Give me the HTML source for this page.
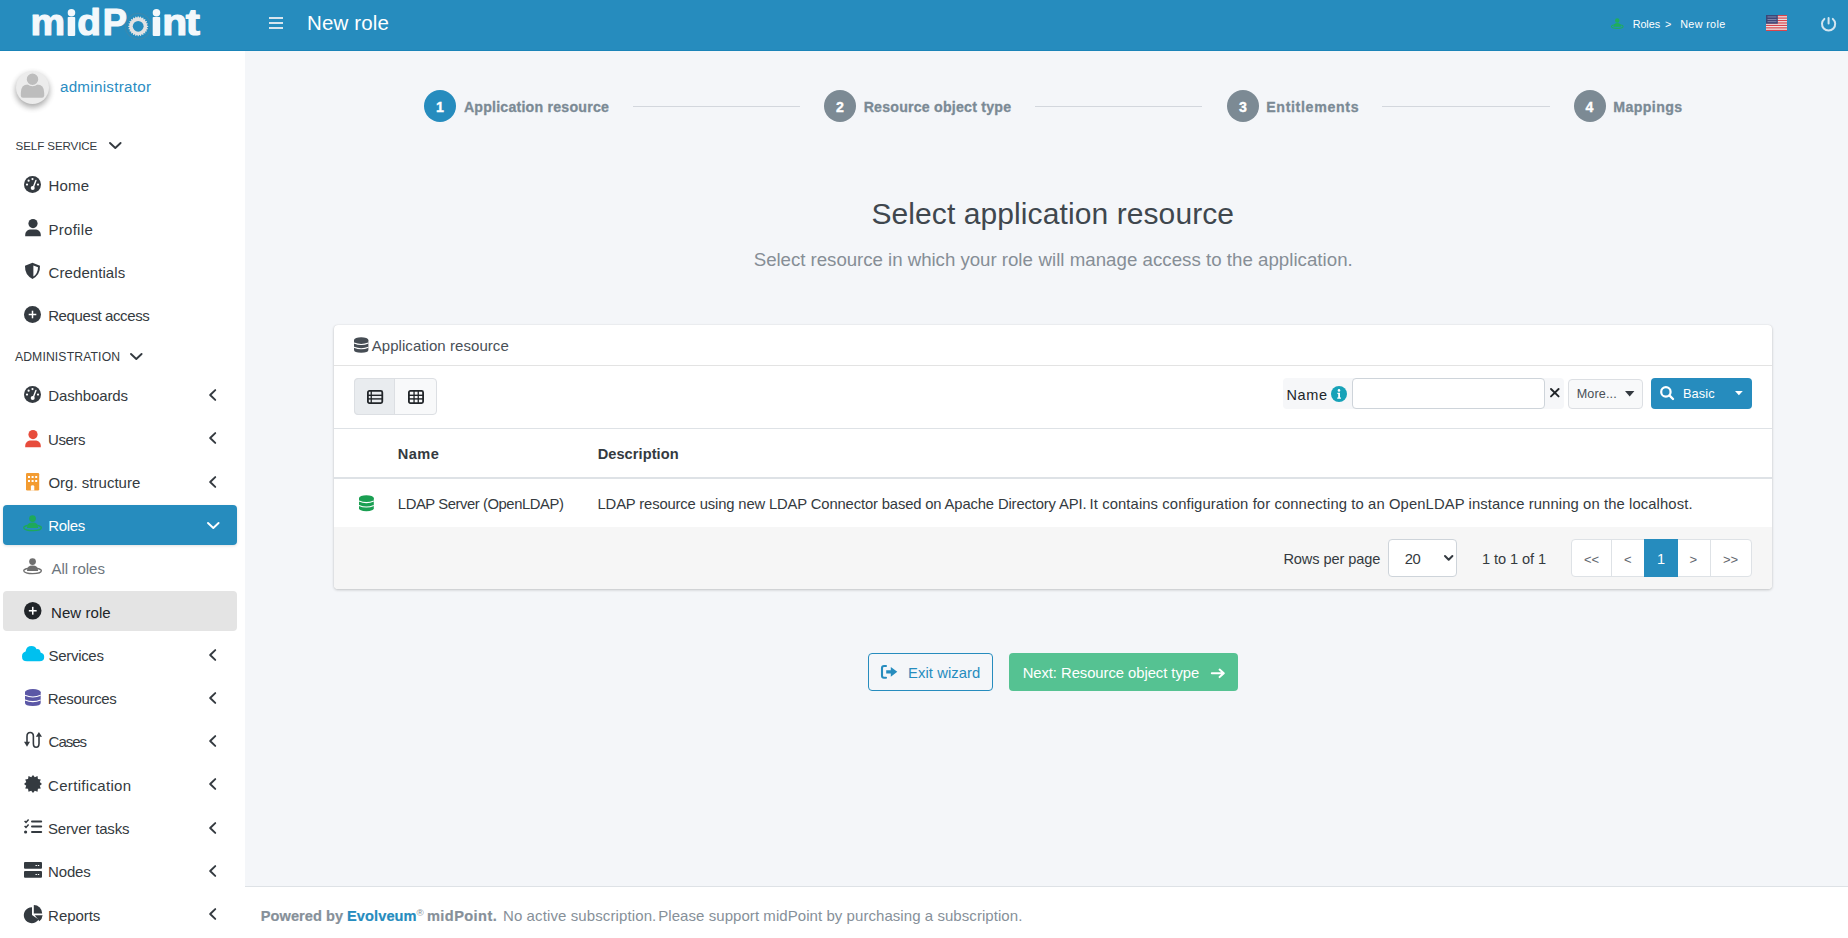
<!DOCTYPE html>
<html><head><meta charset="utf-8">
<style>
*{box-sizing:border-box;margin:0;padding:0}
html,body{width:1848px;height:938px;overflow:hidden;background:#f4f6f9;font-family:"Liberation Sans",sans-serif;color:#343a40;position:relative}
.a{position:absolute}
.t{position:absolute;white-space:nowrap;line-height:1}
svg{position:absolute;overflow:visible}
sup{line-height:0}
</style></head><body>
<div class="a" style="left:0px;top:0px;width:1848px;height:51px;background:#268cbe;border-bottom:1px solid #1a84b8"></div>
<svg style="left:0px;top:0px" width="220" height="50" viewBox="0 0 220 50"><text x="0" y="0" transform="translate(30.6,35.0) scale(1.05,1)" font-family="Liberation Sans" font-weight="700" font-size="37" fill="#f3f8fb" stroke="#f3f8fb" stroke-width="1.2" stroke-linejoin="round">m</text><rect x="67.7" y="16.9" width="7.5" height="19" rx="0.8" fill="#f3f8fb"/><circle cx="71.45" cy="12.7" r="3.75" fill="#f3f8fb"/><text x="0" y="0" transform="translate(77.2,35.0) scale(1.05,1)" font-family="Liberation Sans" font-weight="700" font-size="37" fill="#f3f8fb" stroke="#f3f8fb" stroke-width="1.2" stroke-linejoin="round">d</text><text x="0" y="0" transform="translate(102.8,35.0) scale(0.98,1)" font-family="Liberation Sans" font-weight="700" font-size="37" fill="#f3f8fb" stroke="#f3f8fb" stroke-width="1.2" stroke-linejoin="round">P</text><rect x="152.7" y="16.9" width="7.5" height="19" rx="0.8" fill="#f3f8fb"/><circle cx="156.45" cy="12.7" r="3.75" fill="#f3f8fb"/><text x="0" y="0" transform="translate(162.2,35.0) scale(1.1,1)" font-family="Liberation Sans" font-weight="700" font-size="37" fill="#f3f8fb" stroke="#f3f8fb" stroke-width="1.2" stroke-linejoin="round">n</text><text x="0" y="0" transform="translate(185.8,35.0) scale(1.15,1)" font-family="Liberation Sans" font-weight="700" font-size="37" fill="#f3f8fb" stroke="#f3f8fb" stroke-width="1.2" stroke-linejoin="round">t</text><circle cx="138.2" cy="26.3" r="13" fill="none" stroke="rgba(160,120,100,.35)" stroke-width=".6"/><polygon points="148.19,25.97 148.19,26.63 146.96,27.16 146.88,27.73 147.94,28.57 147.77,29.20 146.44,29.40 146.22,29.93 147.02,31.01 146.69,31.58 145.35,31.43 145.00,31.88 145.50,33.14 145.04,33.60 143.78,33.10 143.33,33.45 143.48,34.79 142.91,35.12 141.83,34.32 141.30,34.54 141.10,35.87 140.47,36.04 139.63,34.98 139.06,35.06 138.53,36.29 137.87,36.29 137.34,35.06 136.77,34.98 135.93,36.04 135.30,35.87 135.10,34.54 134.57,34.32 133.49,35.12 132.92,34.79 133.07,33.45 132.62,33.10 131.36,33.60 130.90,33.14 131.40,31.88 131.05,31.43 129.71,31.58 129.38,31.01 130.18,29.93 129.96,29.40 128.63,29.20 128.46,28.57 129.52,27.73 129.44,27.16 128.21,26.63 128.21,25.97 129.44,25.44 129.52,24.87 128.46,24.03 128.63,23.40 129.96,23.20 130.18,22.67 129.38,21.59 129.71,21.02 131.05,21.17 131.40,20.72 130.90,19.46 131.36,19.00 132.62,19.50 133.07,19.15 132.92,17.81 133.49,17.48 134.57,18.28 135.10,18.06 135.30,16.73 135.93,16.56 136.77,17.62 137.34,17.54 137.87,16.31 138.53,16.31 139.06,17.54 139.63,17.62 140.47,16.56 141.10,16.73 141.30,18.06 141.83,18.28 142.91,17.48 143.48,17.81 143.33,19.15 143.78,19.50 145.04,19.00 145.50,19.46 145.00,20.72 145.35,21.17 146.69,21.02 147.02,21.59 146.22,22.67 146.44,23.20 147.77,23.40 147.94,24.03 146.88,24.87 146.96,25.44" fill="#e2e2e2"/><circle cx="138.2" cy="26.3" r="5.4" fill="#268cbe"/></svg>
<svg style="left:269px;top:17px" width="14" height="12" viewBox="0 0 14 12"><rect x="0" y="0" width="14" height="2" fill="#d8e5ee"/><rect x="0" y="5" width="14" height="2" fill="#d8e5ee"/><rect x="0" y="10" width="14" height="2" fill="#d8e5ee"/></svg>
<div class="t" style="left:306.96px;top:12.65px;font-size:20.5px;color:#fff;letter-spacing:0.150px;">New role</div>
<svg style="left:1610.5px;top:17.5px" width="12.5" height="11" viewBox="0 0 19 16.5"><circle cx="9.5" cy="3.6" r="3.4" fill="#1fae5b"/><path d="M3.9 13 Q3.9 7.6 9.5 7.6 Q15.1 7.6 15.1 13 Z" fill="#1fae5b"/><ellipse cx="9.5" cy="12.9" rx="8.9" ry="2.9" fill="none" stroke="#1fae5b" stroke-width="1.6"/></svg>
<div class="t" style="left:1632.64px;top:18.96px;font-size:10.8px;color:#fff;letter-spacing:-0.045px;">Roles</div>
<div class="t" style="left:1665.00px;top:18.96px;font-size:10.8px;color:#fff;">&gt;</div>
<div class="t" style="left:1680.20px;top:18.96px;font-size:10.8px;color:#fff;letter-spacing:0.348px;">New role</div>
<svg style="left:1766px;top:15px" width="21" height="16" viewBox="0 0 21 16"><rect width="21" height="16" fill="#eeeeee"/><g fill="#d9444c"><rect y="0" width="21" height="1.25"/><rect y="2.45" width="21" height="1.25"/><rect y="4.9" width="21" height="1.25"/><rect y="7.35" width="21" height="1.25"/><rect y="9.8" width="21" height="1.25"/><rect y="12.25" width="21" height="1.25"/><rect y="14.75" width="21" height="1.25"/></g><rect width="11.8" height="8.7" fill="#3d4677"/><g fill="#9aa0c0"><rect x="1.5" y="1.6" width="9" height="0.7"/><rect x="1.5" y="4" width="9" height="0.7"/><rect x="1.5" y="6.4" width="9" height="0.7"/></g></svg>
<svg style="left:1820.7px;top:17px" width="15.2" height="14.2" viewBox="0 0 15.2 14.2"><path d="M3.36 1.9 A6.6 6.6 0 1 0 11.84 1.9" fill="none" stroke="#d3e5f0" stroke-width="2" stroke-linecap="round"/><line x1="7.6" y1="1" x2="7.6" y2="6.6" stroke="#d3e5f0" stroke-width="2" stroke-linecap="round"/></svg>
<div class="a" style="left:0px;top:51px;width:245px;height:887px;background:#fff"></div>
<div class="a" style="left:16px;top:70.5px;width:33px;height:33px;border-radius:50%;background:#ececec;box-shadow:0 3px 6px rgba(0,0,0,.16),0 3px 6px rgba(0,0,0,.23)"></div>
<svg style="left:16px;top:70.5px" width="33" height="33" viewBox="0 0 33 33"><path d="M4.8 22 Q4.8 13.6 12 13.6 L21 13.6 Q28.2 13.6 28.2 22 L28.2 24.6 Q28.2 26.8 26 26.8 L7 26.8 Q4.8 26.8 4.8 24.6Z" fill="#bdbdbd"/><circle cx="16.5" cy="8.2" r="6.4" fill="#bdbdbd" stroke="#ececec" stroke-width="1.3"/></svg>
<div class="t" style="left:59.94px;top:79.33px;font-size:15.2px;color:#2a8cc2;letter-spacing:0.269px;">administrator</div>
<div class="t" style="left:15.54px;top:139.78px;font-size:11.6px;color:#343a40;letter-spacing:-0.100px;">SELF SERVICE</div>
<svg style="left:108.5px;top:142px" width="12.6" height="7" viewBox="0 0 12.6 7"><path d="M1 1 L6.3 6 L11.6 1" fill="none" stroke="#343a40" stroke-width="1.9" stroke-linecap="round" stroke-linejoin="round"/></svg>
<div class="t" style="left:14.88px;top:350.67px;font-size:12.2px;color:#343a40;letter-spacing:0.140px;">ADMINISTRATION</div>
<svg style="left:130.4px;top:353px" width="12.6" height="7" viewBox="0 0 12.6 7"><path d="M1 1 L6.3 6 L11.6 1" fill="none" stroke="#343a40" stroke-width="1.9" stroke-linecap="round" stroke-linejoin="round"/></svg>
<div class="a" style="left:3px;top:504.81px;width:234px;height:40px;background:#268cbe;border-radius:4px;box-shadow:0 1px 3px rgba(0,0,0,.12)"></div>
<div class="a" style="left:3px;top:591.35px;width:234px;height:40px;background:#e4e4e4;border-radius:4px"></div>
<svg style="left:24.1px;top:175.7px" width="17" height="17" viewBox="0 0 17 17"><circle cx="8.5" cy="8.5" r="8.5" fill="#343a40"/><circle cx="8.5" cy="3.1" r="1.1" fill="#fff"/><circle cx="4.6" cy="4.7" r="1.1" fill="#fff"/><circle cx="3" cy="8.6" r="1.1" fill="#fff"/><circle cx="14" cy="8.6" r="1.1" fill="#fff"/><path d="M11.9 4.4 L9.6 10.4" stroke="#fff" stroke-width="1.4" stroke-linecap="round"/><circle cx="8.7" cy="12" r="2" fill="#fff"/></svg>
<svg style="left:24.6px;top:218.77px" width="16" height="17.2" viewBox="0 0 16 17.2"><circle cx="8" cy="4.6" r="4.6" fill="#343a40"/><path d="M0.2 17.2 L0.2 16 C0.2 12.2 3 10.4 6 10.4 L10 10.4 C13 10.4 15.8 12.2 15.8 16 L15.8 17.2 Z" fill="#343a40"/></svg>
<svg style="left:24.2px;top:261.74px" width="17" height="17.5" viewBox="0 0 17 17.5"><path d="M8.5 0.8 L16 3.8 Q16.4 12.8 8.5 17 Q0.6 12.8 1 3.8 Z" fill="#343a40"/><path d="M9.4 3.4 L14 5.2 Q13.8 11.8 9.4 14.5 Z" fill="#fff"/></svg>
<svg style="left:24.2px;top:306.41px" width="17" height="17" viewBox="0 0 17 17"><circle cx="8.5" cy="8.5" r="8.5" fill="#343a40"/><rect x="7.75" y="4.7" width="1.5" height="7.6" fill="#fff"/><rect x="4.7" y="7.75" width="7.6" height="1.5" fill="#fff"/></svg>
<svg style="left:24.1px;top:386.0px" width="17" height="17" viewBox="0 0 17 17"><circle cx="8.5" cy="8.5" r="8.5" fill="#343a40"/><circle cx="8.5" cy="3.1" r="1.1" fill="#fff"/><circle cx="4.6" cy="4.7" r="1.1" fill="#fff"/><circle cx="3" cy="8.6" r="1.1" fill="#fff"/><circle cx="14" cy="8.6" r="1.1" fill="#fff"/><path d="M11.9 4.4 L9.6 10.4" stroke="#fff" stroke-width="1.4" stroke-linecap="round"/><circle cx="8.7" cy="12" r="2" fill="#fff"/></svg>
<svg style="left:24.6px;top:429.87px" width="16" height="17.2" viewBox="0 0 16 17.2"><circle cx="8" cy="4.6" r="4.6" fill="#e74c3c"/><path d="M0.2 17.2 L0.2 16 C0.2 12.2 3 10.4 6 10.4 L10 10.4 C13 10.4 15.8 12.2 15.8 16 L15.8 17.2 Z" fill="#e74c3c"/></svg>
<svg style="left:25.8px;top:472.74px" width="13.2" height="17.4" viewBox="0 0 13.2 17.4"><rect x="0" y="0" width="13.2" height="17.4" rx="1.2" fill="#f39c32"/><g fill="#fff"><rect x="2" y="3" width="2" height="2"/><rect x="5.6" y="3" width="2" height="2"/><rect x="9.2" y="3" width="2" height="2"/><rect x="2" y="7" width="2" height="2"/><rect x="5.6" y="7" width="2" height="2"/><rect x="9.2" y="7" width="2" height="2"/><path d="M4.9 17.4 L4.9 13.6 Q4.9 12.3 6.6 12.3 Q8.3 12.3 8.3 13.6 L8.3 17.4Z"/></g></svg>
<svg style="left:22.9px;top:515.41px" width="19.1" height="16.4" viewBox="0 0 19 16.5"><circle cx="9.5" cy="3.6" r="3.4" fill="#1ea95a"/><path d="M3.9 13 Q3.9 7.6 9.5 7.6 Q15.1 7.6 15.1 13 Z" fill="#1ea95a"/><ellipse cx="9.5" cy="12.9" rx="8.9" ry="2.9" fill="none" stroke="#1ea95a" stroke-width="1.3"/></svg>
<svg style="left:22.9px;top:558.08px" width="19.1" height="16.4" viewBox="0 0 19 16.5"><circle cx="9.5" cy="3.6" r="3.4" fill="#6f6f6f"/><path d="M3.9 13 Q3.9 7.6 9.5 7.6 Q15.1 7.6 15.1 13 Z" fill="#6f6f6f"/><ellipse cx="9.5" cy="12.9" rx="8.9" ry="2.9" fill="none" stroke="#6f6f6f" stroke-width="1.3"/></svg>
<svg style="left:23.6px;top:602.0500000000001px" width="17.5" height="17.5" viewBox="0 0 17 17"><circle cx="8.5" cy="8.5" r="8.5" fill="#212529"/><rect x="7.75" y="4.7" width="1.5" height="7.6" fill="#fff"/><rect x="4.7" y="7.75" width="7.6" height="1.5" fill="#fff"/></svg>
<svg style="left:21.9px;top:646.02px" width="22.2" height="15.3" viewBox="0 0 22.2 15.3"><path d="M5 15.3 Q0 15.3 0 10.4 Q0 6.4 3.6 5.5 Q4.4 0 9.6 0 Q13.2 0 14.6 3.2 Q18 2.6 18.6 6.6 Q22.2 7.6 22.2 11 Q22.2 15.3 17.6 15.3 Z" fill="#00c0ef"/></svg>
<svg style="left:25.1px;top:689.3900000000001px" width="15.7" height="17" viewBox="0 0 15.7 17"><ellipse cx="7.85" cy="3" rx="7.85" ry="3" fill="#5b57a6"/><path d="M0 3 L0 14 Q0 17 7.85 17 Q15.7 17 15.7 14 L15.7 3 Z" fill="#5b57a6"/><path d="M0 6.3 Q7.85 9.6 15.7 6.3" stroke="#fff" stroke-width="1.1" fill="none"/><path d="M0 11 Q7.85 14.3 15.7 11" stroke="#fff" stroke-width="1.1" fill="none"/></svg>
<svg style="left:24px;top:730.5600000000001px" width="18" height="17.8" viewBox="0 0 19.2 17.8"><path d="M3.2 12 L3.2 5 Q3.2 1 6.6 1 Q10 1 10 5 L10 12.8 Q10 16.8 13 16.8 Q16 16.8 16 12.8 L16 5" fill="none" stroke="#343a40" stroke-width="1.7"/><path d="M0 11 L6.4 11 L3.2 16.2Z" fill="#343a40"/><path d="M12.6 5.6 L19.2 5.6 L15.9 0.6Z" fill="#343a40"/></svg>
<svg style="left:23.6px;top:775.0300000000001px" width="18" height="17.8" viewBox="0 0 18 17.8"><polygon points="18.00,8.90 15.76,10.71 16.79,13.40 13.95,13.85 13.50,16.69 10.81,15.66 9.00,17.90 7.19,15.66 4.50,16.69 4.05,13.85 1.21,13.40 2.24,10.71 0.00,8.90 2.24,7.09 1.21,4.40 4.05,3.95 4.50,1.11 7.19,2.14 9.00,-0.10 10.81,2.14 13.50,1.11 13.95,3.95 16.79,4.40 15.76,7.09" fill="#343a40"/></svg>
<svg style="left:23.7px;top:819.4000000000001px" width="18.2" height="14.7" viewBox="0 0 18.2 14.7"><path d="M0.6 2 L2 3.4 L4.6 0.6" stroke="#343a40" stroke-width="1.5" fill="none"/><path d="M0.6 7 L2 8.4 L4.6 5.6" stroke="#343a40" stroke-width="1.5" fill="none"/><circle cx="1.6" cy="13" r="1.6" fill="#343a40"/><rect x="7" y="1.4" width="11.2" height="2" rx="1" fill="#343a40"/><rect x="7" y="6.4" width="11.2" height="2" rx="1" fill="#343a40"/><rect x="7" y="12" width="11.2" height="2" rx="1" fill="#343a40"/></svg>
<svg style="left:23.7px;top:861.97px" width="18" height="16" viewBox="0 0 18 16"><rect x="0" y="0" width="18" height="6.8" rx="1" fill="#343a40"/><rect x="0" y="9" width="18" height="6.8" rx="1" fill="#343a40"/><g fill="#fff"><rect x="11.5" y="3" width="1.4" height="1"/><rect x="13.8" y="3" width="1.4" height="1"/><rect x="11.5" y="12" width="1.4" height="1"/><rect x="13.8" y="12" width="1.4" height="1"/></g></svg>
<svg style="left:23.7px;top:905.44px" width="18.8" height="17.5" viewBox="0 0 18.8 17.5"><path d="M8 2.2 L8 10 L14.6 14.4 A8 8 0 1 1 8 2.2Z" fill="#343a40"/><path d="M9.8 0 A8.4 8.4 0 0 1 18.2 8.4 L9.8 8.4Z" fill="#343a40"/><path d="M10.8 10.2 L18.6 10.2 A8.6 8.6 0 0 1 15.4 16.2Z" fill="#343a40"/></svg>
<div class="t" style="left:48.42px;top:178.30px;font-size:15px;color:#343a40;letter-spacing:0.194px;">Home</div>
<div class="t" style="left:48.42px;top:221.57px;font-size:15px;color:#343a40;letter-spacing:0.300px;">Profile</div>
<div class="t" style="left:48.60px;top:264.84px;font-size:15px;color:#343a40;letter-spacing:0.072px;">Credentials</div>
<div class="t" style="left:48.16px;top:308.11px;font-size:15px;color:#343a40;letter-spacing:-0.395px;">Request access</div>
<div class="t" style="left:48.16px;top:388.30px;font-size:15px;color:#343a40;letter-spacing:-0.103px;">Dashboards</div>
<div class="t" style="left:48.06px;top:431.57px;font-size:15px;color:#343a40;letter-spacing:-0.456px;">Users</div>
<div class="t" style="left:48.38px;top:474.84px;font-size:15px;color:#343a40;letter-spacing:0.018px;">Org. structure</div>
<div class="t" style="left:48.60px;top:647.92px;font-size:15px;color:#343a40;letter-spacing:-0.317px;">Services</div>
<div class="t" style="left:47.80px;top:691.19px;font-size:15px;color:#343a40;letter-spacing:-0.328px;">Resources</div>
<div class="t" style="left:48.60px;top:734.46px;font-size:15px;color:#343a40;letter-spacing:-1.000px;">Cases</div>
<div class="t" style="left:48.02px;top:777.73px;font-size:15px;color:#343a40;letter-spacing:0.318px;">Certification</div>
<div class="t" style="left:48.02px;top:821.00px;font-size:15px;color:#343a40;letter-spacing:-0.168px;">Server tasks</div>
<div class="t" style="left:48.12px;top:864.27px;font-size:15px;color:#343a40;letter-spacing:-0.171px;">Nodes</div>
<div class="t" style="left:48.12px;top:907.54px;font-size:15px;color:#343a40;letter-spacing:-0.058px;">Reports</div>
<div class="t" style="left:48.16px;top:518.11px;font-size:15px;color:#fff;letter-spacing:-0.300px;">Roles</div>
<div class="t" style="left:51.44px;top:561.38px;font-size:15px;color:#6c757d;letter-spacing:0.023px;">All roles</div>
<div class="t" style="left:51.08px;top:604.65px;font-size:15px;color:#212529;letter-spacing:0.048px;">New role</div>
<svg style="left:208.8px;top:389.0px" width="7.5" height="12" viewBox="0 0 7.7 12"><path d="M6.4 1 L1.2 6 L6.4 11" fill="none" stroke="#343a40" stroke-width="2" stroke-linecap="round" stroke-linejoin="round"/></svg>
<svg style="left:208.8px;top:432.27px" width="7.5" height="12" viewBox="0 0 7.7 12"><path d="M6.4 1 L1.2 6 L6.4 11" fill="none" stroke="#343a40" stroke-width="2" stroke-linecap="round" stroke-linejoin="round"/></svg>
<svg style="left:208.8px;top:475.54px" width="7.5" height="12" viewBox="0 0 7.7 12"><path d="M6.4 1 L1.2 6 L6.4 11" fill="none" stroke="#343a40" stroke-width="2" stroke-linecap="round" stroke-linejoin="round"/></svg>
<svg style="left:208.8px;top:648.62px" width="7.5" height="12" viewBox="0 0 7.7 12"><path d="M6.4 1 L1.2 6 L6.4 11" fill="none" stroke="#343a40" stroke-width="2" stroke-linecap="round" stroke-linejoin="round"/></svg>
<svg style="left:208.8px;top:691.8900000000001px" width="7.5" height="12" viewBox="0 0 7.7 12"><path d="M6.4 1 L1.2 6 L6.4 11" fill="none" stroke="#343a40" stroke-width="2" stroke-linecap="round" stroke-linejoin="round"/></svg>
<svg style="left:208.8px;top:735.1600000000001px" width="7.5" height="12" viewBox="0 0 7.7 12"><path d="M6.4 1 L1.2 6 L6.4 11" fill="none" stroke="#343a40" stroke-width="2" stroke-linecap="round" stroke-linejoin="round"/></svg>
<svg style="left:208.8px;top:778.4300000000001px" width="7.5" height="12" viewBox="0 0 7.7 12"><path d="M6.4 1 L1.2 6 L6.4 11" fill="none" stroke="#343a40" stroke-width="2" stroke-linecap="round" stroke-linejoin="round"/></svg>
<svg style="left:208.8px;top:821.7px" width="7.5" height="12" viewBox="0 0 7.7 12"><path d="M6.4 1 L1.2 6 L6.4 11" fill="none" stroke="#343a40" stroke-width="2" stroke-linecap="round" stroke-linejoin="round"/></svg>
<svg style="left:208.8px;top:864.97px" width="7.5" height="12" viewBox="0 0 7.7 12"><path d="M6.4 1 L1.2 6 L6.4 11" fill="none" stroke="#343a40" stroke-width="2" stroke-linecap="round" stroke-linejoin="round"/></svg>
<svg style="left:208.8px;top:908.24px" width="7.5" height="12" viewBox="0 0 7.7 12"><path d="M6.4 1 L1.2 6 L6.4 11" fill="none" stroke="#343a40" stroke-width="2" stroke-linecap="round" stroke-linejoin="round"/></svg>
<svg style="left:207px;top:522.31px" width="12.6" height="7" viewBox="0 0 12.6 7"><path d="M1 1 L6.3 6 L11.6 1" fill="none" stroke="#fff" stroke-width="1.9" stroke-linecap="round" stroke-linejoin="round"/></svg>
<div class="a" style="left:424px;top:90px;width:32px;height:32px;border-radius:50%;background:#268cbe"></div>
<div class="t" style="left:424px;top:99.88px;width:32px;text-align:center;font-size:14.2px;font-weight:700;color:#fff;-webkit-text-stroke:.35px #fff">1</div>
<div class="t" style="left:463.88px;top:100.08px;font-size:14.2px;color:#7b8a95;font-weight:700;letter-spacing:0.204px;-webkit-text-stroke:.3px #7b8a95;">Application resource</div>
<div class="a" style="left:824px;top:90px;width:32px;height:32px;border-radius:50%;background:#7c8a94"></div>
<div class="t" style="left:824px;top:99.88px;width:32px;text-align:center;font-size:14.2px;font-weight:700;color:#fff;-webkit-text-stroke:.35px #fff">2</div>
<div class="t" style="left:863.64px;top:100.08px;font-size:14.2px;color:#7b8a95;font-weight:700;letter-spacing:0.206px;-webkit-text-stroke:.3px #7b8a95;">Resource object type</div>
<div class="a" style="left:1227px;top:90px;width:32px;height:32px;border-radius:50%;background:#7c8a94"></div>
<div class="t" style="left:1227px;top:99.88px;width:32px;text-align:center;font-size:14.2px;font-weight:700;color:#fff;-webkit-text-stroke:.35px #fff">3</div>
<div class="t" style="left:1266.20px;top:100.08px;font-size:14.2px;color:#7b8a95;font-weight:700;letter-spacing:0.656px;-webkit-text-stroke:.3px #7b8a95;">Entitlements</div>
<div class="a" style="left:1573.5px;top:90px;width:32px;height:32px;border-radius:50%;background:#7c8a94"></div>
<div class="t" style="left:1573.5px;top:99.88px;width:32px;text-align:center;font-size:14.2px;font-weight:700;color:#fff;-webkit-text-stroke:.35px #fff">4</div>
<div class="t" style="left:1613.20px;top:100.08px;font-size:14.2px;color:#7b8a95;font-weight:700;letter-spacing:0.401px;-webkit-text-stroke:.3px #7b8a95;">Mappings</div>
<div class="a" style="left:633px;top:106px;width:167px;height:1px;background:#d3d7dd"></div>
<div class="a" style="left:1035px;top:106px;width:167px;height:1px;background:#d3d7dd"></div>
<div class="a" style="left:1382px;top:106px;width:167.5px;height:1px;background:#d3d7dd"></div>
<div class="t" style="left:871.40px;top:198.91px;font-size:30px;color:#3f474e;letter-spacing:0.093px;">Select application resource</div>
<div class="t" style="left:753.72px;top:251.17px;font-size:18.7px;color:#868e96;letter-spacing:-0.041px;">Select resource in which your role</div>
<div class="t" style="left:1038.52px;top:251.17px;font-size:18.7px;color:#868e96;letter-spacing:0.014px;">will manage access to the application.</div>
<div class="a" style="left:333.5px;top:324.5px;width:1438.5px;height:264.5px;background:#fff;border-radius:4px;box-shadow:0 0 1px rgba(0,0,0,.125),0 1px 3px rgba(0,0,0,.2)"></div>
<div class="a" style="left:333.5px;top:365px;width:1438.5px;height:1px;background:#e3e3e3"></div>
<svg style="left:353.8px;top:337px" width="14.4" height="16" viewBox="0 0 15.7 17"><ellipse cx="7.85" cy="3" rx="7.85" ry="3" fill="#464d54"/><path d="M0 3 L0 14 Q0 17 7.85 17 Q15.7 17 15.7 14 L15.7 3 Z" fill="#464d54"/><path d="M0 6.3 Q7.85 9.6 15.7 6.3" stroke="#fff" stroke-width="1.1" fill="none"/><path d="M0 11 Q7.85 14.3 15.7 11" stroke="#fff" stroke-width="1.1" fill="none"/></svg>
<div class="t" style="left:371.66px;top:338.10px;font-size:15px;color:#495057;letter-spacing:0.063px;">Application resource</div>
<div class="a" style="left:354.2px;top:378.3px;width:82.5px;height:37px;border:1px solid #dcdfe3;border-radius:4px;background:#f8f9fa"></div>
<div class="a" style="left:354.2px;top:378.3px;width:41.2px;height:37px;border:1px solid #dcdfe3;border-radius:4px 0 0 4px;background:#e9ecef"></div>
<svg style="left:367px;top:390px" width="16.2" height="14" viewBox="0 0 16.2 14"><rect x="0.9" y="0.9" width="14.4" height="12.2" rx="1.5" fill="none" stroke="#212529" stroke-width="1.8"/><rect x="0.9" y="4.6" width="14.4" height="1.4" fill="#212529"/><rect x="0.9" y="8.2" width="14.4" height="1.4" fill="#212529"/><rect x="3.6" y="0.9" width="1.3" height="12.2" fill="#212529"/></svg>
<svg style="left:408px;top:390px" width="16" height="14" viewBox="0 0 16 14"><rect x="0.9" y="0.9" width="14.2" height="12.2" rx="1.5" fill="none" stroke="#212529" stroke-width="1.8"/><rect x="0.9" y="4.6" width="14.2" height="1.4" fill="#212529"/><rect x="0.9" y="8.2" width="14.2" height="1.4" fill="#212529"/><rect x="5.4" y="0.9" width="1.3" height="12.2" fill="#212529"/><rect x="9.6" y="0.9" width="1.3" height="12.2" fill="#212529"/></svg>
<div class="a" style="left:1283px;top:378px;width:281px;height:31px;background:#f6f7f9;border-radius:4px"></div>
<div class="t" style="left:1286.52px;top:387.73px;font-size:14.5px;color:#212529;letter-spacing:0.591px;">Name</div>
<svg style="left:1331px;top:386px" width="16.4" height="16" viewBox="0 0 16.4 16"><circle cx="8" cy="8" r="8" fill="#17a2b8"/><circle cx="8" cy="4.4" r="1.3" fill="#fff"/><path d="M6.4 6.8 L9 6.8 L9 11.6 L10 11.6 L10 12.8 L6.2 12.8 L6.2 11.6 L7.2 11.6 L7.2 8 L6.4 8Z" fill="#fff"/></svg>
<div class="a" style="left:1351.5px;top:378.3px;width:193.2px;height:30.3px;background:#fff;border:1px solid #ced4da;border-radius:4px"></div>
<svg style="left:1549.7px;top:387.8px" width="9.6" height="9.4" viewBox="0 0 9.6 9.4"><path d="M1 1 L8.6 8.4 M8.6 1 L1 8.4" stroke="#212529" stroke-width="1.9" stroke-linecap="round"/></svg>
<div class="a" style="left:1568.4px;top:378.5px;width:74.3px;height:30.1px;background:#f8f9fa;border:1px solid #dcdfe3;border-radius:4px"></div>
<div class="t" style="left:1576.64px;top:387.93px;font-size:12.6px;color:#495057;letter-spacing:0.156px;">More...</div>
<svg style="left:1624.6px;top:391px" width="9.4" height="5.4" viewBox="0 0 9.4 5.4"><path d="M0 0 L9.4 0 L4.7 5.4Z" fill="#343a40"/></svg>
<div class="a" style="left:1651.1px;top:378px;width:100.7px;height:30.8px;background:#268cbe;border-radius:4px"></div>
<svg style="left:1659.7px;top:386px" width="14.1" height="14" viewBox="0 0 14.1 14"><circle cx="5.9" cy="5.9" r="4.7" fill="none" stroke="#fff" stroke-width="2.2"/><path d="M9.4 9.4 L13 13" stroke="#fff" stroke-width="2.4" stroke-linecap="round"/></svg>
<div class="t" style="left:1682.98px;top:387.76px;font-size:12.8px;color:#fff;letter-spacing:0.081px;">Basic</div>
<svg style="left:1735.1px;top:391px" width="7.8" height="4.2" viewBox="0 0 7.8 4.2"><path d="M0 0 L7.8 0 L3.9 4.2Z" fill="#fff"/></svg>
<div class="a" style="left:333.5px;top:428px;width:1438.5px;height:1px;background:#dee2e6"></div>
<div class="a" style="left:333.5px;top:476.8px;width:1438.5px;height:2px;background:#dee2e6"></div>
<div class="t" style="left:397.86px;top:447.04px;font-size:14.6px;color:#343a40;font-weight:700;letter-spacing:0.413px;">Name</div>
<div class="t" style="left:597.64px;top:447.04px;font-size:14.6px;color:#343a40;font-weight:700;letter-spacing:0.070px;">Description</div>
<svg style="left:358.6px;top:494.7px" width="14.8" height="16.3" viewBox="0 0 15.7 17"><ellipse cx="7.85" cy="3" rx="7.85" ry="3" fill="#1a9f52"/><path d="M0 3 L0 14 Q0 17 7.85 17 Q15.7 17 15.7 14 L15.7 3 Z" fill="#1a9f52"/><path d="M0 6.3 Q7.85 9.6 15.7 6.3" stroke="#fff" stroke-width="1.1" fill="none"/><path d="M0 11 Q7.85 14.3 15.7 11" stroke="#fff" stroke-width="1.1" fill="none"/></svg>
<div class="t" style="left:397.86px;top:496.57px;font-size:14.8px;color:#343a40;letter-spacing:-0.424px;">LDAP Server (OpenLDAP)</div>
<div class="t" style="left:597.50px;top:496.57px;font-size:14.8px;color:#343a40;letter-spacing:-0.143px;">LDAP resource using new LDAP Connector based on Apache Directory API.</div>
<div class="t" style="left:1089.52px;top:496.57px;font-size:14.8px;color:#343a40;letter-spacing:0.105px;">It contains configuration for connecting to an OpenLDAP instance running on the localhost.</div>
<div class="a" style="left:333.5px;top:527px;width:1438.5px;height:62px;background:#f6f6f6;border-radius:0 0 4px 4px"></div>
<div class="t" style="left:1283.42px;top:552.24px;font-size:14.6px;color:#343a40;letter-spacing:-0.100px;">Rows per page</div>
<div class="a" style="left:1388.3px;top:539.4px;width:69.2px;height:37.2px;background:#fff;border:1px solid #ced4da;border-radius:4px"></div>
<div class="t" style="left:1404.76px;top:551.87px;font-size:14.8px;color:#343a40;letter-spacing:-0.480px;">20</div>
<svg style="left:1444.2px;top:555.2px" width="9.4" height="6" viewBox="0 0 9.4 6"><path d="M1 1 L4.7 4.7 L8.4 1" fill="none" stroke="#343a40" stroke-width="2" stroke-linecap="round" stroke-linejoin="round"/></svg>
<div class="t" style="left:1481.98px;top:552.04px;font-size:14.6px;color:#343a40;letter-spacing:-0.088px;">1 to 1 of 1</div>
<div class="a" style="left:1570.5px;top:539.4px;width:181px;height:37.4px;background:#fff;border:1px solid #dee2e6;border-radius:4px"></div>
<div class="a" style="left:1611px;top:539.4px;width:1px;height:37.4px;background:#dee2e6"></div>
<div class="a" style="left:1710px;top:539.4px;width:1px;height:37.4px;background:#dee2e6"></div>
<div class="a" style="left:1644px;top:539.2px;width:34px;height:37.8px;background:#268cbe"></div>
<div class="t" style="left:1584.00px;top:552.50px;font-size:13px;color:#5f666d;">&lt;&lt;</div>
<div class="t" style="left:1624.00px;top:552.50px;font-size:13px;color:#5f666d;">&lt;</div>
<div class="t" style="left:1657.00px;top:552.23px;font-size:14.5px;color:#fff;">1</div>
<div class="t" style="left:1689.50px;top:552.50px;font-size:13px;color:#5f666d;">&gt;</div>
<div class="t" style="left:1723.00px;top:552.50px;font-size:13px;color:#5f666d;">&gt;&gt;</div>
<div class="a" style="left:868px;top:653px;width:125px;height:38px;border:1px solid #268cbe;border-radius:4px"></div>
<svg style="left:881.2px;top:665px" width="16.3" height="13.7" viewBox="0 0 16.3 13.7"><path d="M5 1 L3 1 Q1 1 1 3 L1 10.7 Q1 12.7 3 12.7 L5 12.7" fill="none" stroke="#268cbe" stroke-width="2.1" stroke-linecap="round"/><path d="M5.2 5.3 L9.8 5.3 L9.8 1.9 L16.3 6.85 L9.8 11.8 L9.8 8.4 L5.2 8.4Z" fill="#268cbe"/></svg>
<div class="t" style="left:908.08px;top:666.37px;font-size:14.8px;color:#268cbe;letter-spacing:0.068px;">Exit wizard</div>
<div class="a" style="left:1009px;top:653px;width:228.8px;height:38px;background:#00a65a;opacity:.65;border-radius:4px"></div>
<div class="t" style="left:1022.64px;top:666.17px;font-size:14.8px;color:#fff;letter-spacing:-0.044px;">Next: Resource object type</div>
<svg style="left:1211px;top:669.4px" width="13.8" height="8.7" viewBox="0 0 13.8 8.7"><path d="M0.8 4.35 L12.6 4.35 M8.6 0.6 L12.8 4.35 L8.6 8.1" fill="none" stroke="#fff" stroke-width="2" stroke-linecap="round" stroke-linejoin="round"/></svg>
<div class="a" style="left:245px;top:886px;width:1603px;height:52px;background:#fff;border-top:1px solid #dee2e6"></div>
<div class="t" style="left:260.76px;top:908.64px;font-size:14.6px;color:#869099;font-weight:700;letter-spacing:0.043px;-webkit-text-stroke:.2px #869099;">Powered by</div>
<div class="t" style="left:346.98px;top:908.64px;font-size:14.6px;color:#268cbe;font-weight:700;letter-spacing:0.096px;-webkit-text-stroke:.2px #268cbe;">Evolveum</div>
<div class="t" style="left:416.60px;top:907.90px;font-size:9.8px;color:#869099;">&reg;</div>
<div class="t" style="left:426.98px;top:908.64px;font-size:14.6px;color:#869099;font-weight:700;letter-spacing:0.407px;-webkit-text-stroke:.2px #869099;">midPoint.</div>
<div class="t" style="left:502.96px;top:908.30px;font-size:15px;color:#869099;letter-spacing:0.109px;">No active subscription.</div>
<div class="t" style="left:658.28px;top:908.30px;font-size:15px;color:#869099;letter-spacing:0.058px;">Please support midPoint by purchasing a subscription.</div>
</body></html>
